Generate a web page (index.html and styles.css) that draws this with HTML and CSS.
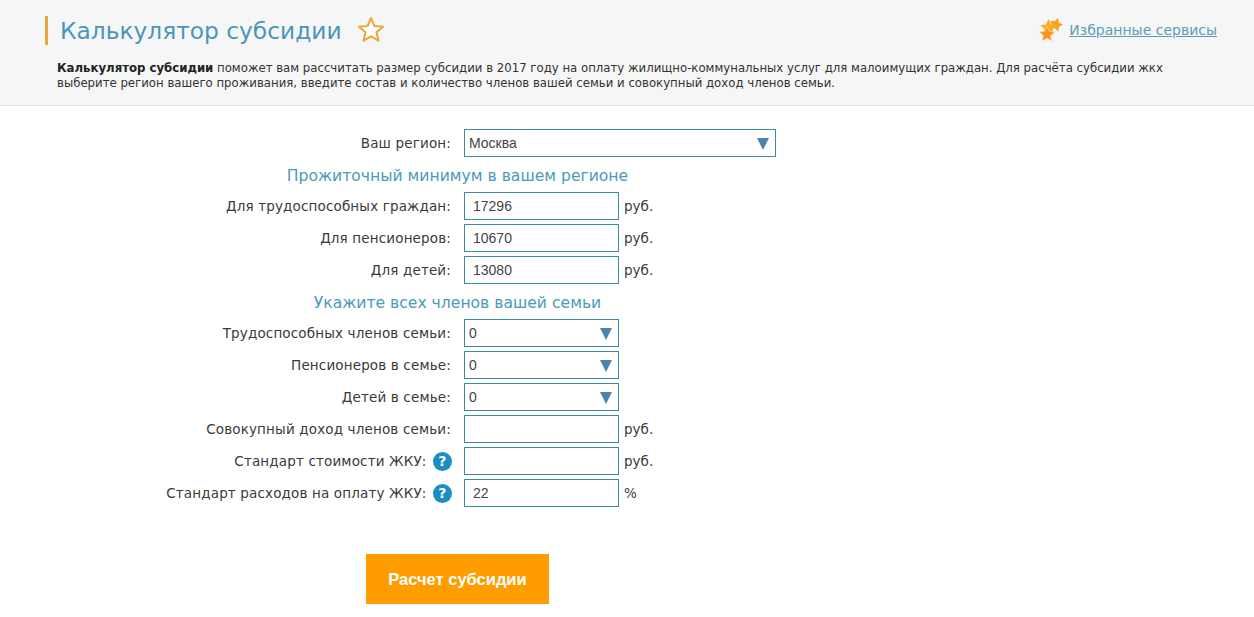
FILE: index.html
```html
<!DOCTYPE html>
<html lang="ru">
<head>
  <meta charset="UTF-8" />
  <title>Калькулятор субсидии</title>
  <link rel="stylesheet" href="styles.css">
</head>
<body>
  <header class="top">
    <div class="top-row">
      <div class="title-wrap">
        <h1 class="title">Калькулятор субсидии</h1>
        <svg class="star" width="28" height="26" viewBox="0 0 28 26">
          <path d="M14 2l3.4 8 8.6.7-6.500 5.600 2 8.400L14 20.300l-7.500 4.400 2-8.400L2 10.700l8.600-.7z" fill="#fff" stroke="#e8a93c" stroke-width="2" stroke-linejoin="round"/>
        </svg>
      </div>
      <div class="fav">
        <svg class="fav-icon" width="24" height="23" viewBox="0 0 24 23">
          <path d="M19 0l.8 4.600 4.200 1.900-4 2.300-.6 4.600-3.400-3.100-4.600.9 1.900-4.300L11 2.800l4.600.5z" fill="#f9a11b"/>
          <path d="M9.500 1l2.500 5.400 5.900.7-4.300 4 1.100 5.800-5.200-2.900-5.200 2.900 1.100-5.800-4.300-4 5.900-.7z" fill="#fbab2a"/>
          <path d="M8 8.500l2.300 4.800 5.200.7-3.800 3.600.9 5.200L8 20.300l-4.600 2.500.9-5.200L.5 14l5.200-.7z" fill="#f7941d" stroke="#fdd9a0" stroke-width=".7"/>
        </svg>
        <a class="fav-link">Избранные сервисы</a>
      </div>
    </div>
    <p class="intro"><b>Калькулятор субсидии</b> поможет вам рассчитать размер субсидии в 2017 году на оплату жилищно-коммунальных услуг для малоимущих граждан. Для расчёта субсидии жкх выберите регион вашего проживания, введите состав и количество членов вашей семьи и совокупный доход членов семьи.</p>
  </header>

  <main class="form">
    <div class="row">
      <div class="label">Ваш регион:</div>
      <div class="select wide">Москва<span class="arrow"></span></div>
    </div>

    <h2 class="section">Прожиточный минимум в вашем регионе</h2>

    <div class="row">
      <div class="label">Для трудоспособных граждан:</div>
      <div class="input">17296</div>
      <div class="unit">руб.</div>
    </div>
    <div class="row">
      <div class="label">Для пенсионеров:</div>
      <div class="input">10670</div>
      <div class="unit">руб.</div>
    </div>
    <div class="row">
      <div class="label">Для детей:</div>
      <div class="input">13080</div>
      <div class="unit">руб.</div>
    </div>

    <h2 class="section">Укажите всех членов вашей семьи</h2>

    <div class="row">
      <div class="label">Трудоспособных членов семьи:</div>
      <div class="select">0<span class="arrow"></span></div>
    </div>
    <div class="row">
      <div class="label">Пенсионеров в семье:</div>
      <div class="select">0<span class="arrow"></span></div>
    </div>
    <div class="row">
      <div class="label">Детей в семье:</div>
      <div class="select">0<span class="arrow"></span></div>
    </div>
    <div class="row">
      <div class="label">Совокупный доход членов семьи:</div>
      <div class="input"></div>
      <div class="unit">руб.</div>
    </div>
    <div class="row">
      <div class="label">Стандарт стоимости ЖКУ: <span class="help">?</span></div>
      <div class="input"></div>
      <div class="unit">руб.</div>
    </div>
    <div class="row">
      <div class="label">Стандарт расходов на оплату ЖКУ: <span class="help">?</span></div>
      <div class="input">22</div>
      <div class="unit">%</div>
    </div>

    <button class="calc-btn">Расчет субсидии</button>
  </main>
</body>
</html>
```

FILE: styles.css
```css
html, body {
  margin: 0;
  padding: 0;
  background: #fff;
  height: 617px;
  overflow: hidden;
}
body {
  font-family: 'DejaVu Sans', Verdana, sans-serif;
  font-size: 13.5px;
  color: #3a3a3a;
}
.top {
  box-sizing: border-box;
  height: 106px;
  background: #f6f6f6;
  border-bottom: 1px solid #e3e3e3;
  padding: 16px 37px 0 45px;
}
.top-row {
  display: flex;
  justify-content: space-between;
  align-items: center;
  height: 29px;
}
.title-wrap {
  display: flex;
  align-items: center;
}
.title {
  margin: 0;
  border-left: 3px solid #e8a93c;
  padding-left: 12px;
  height: 29px;
  line-height: 30px;
  font-size: 23.3px;
  font-weight: 400;
  color: #4a96ba;
}
.star {
  margin: -3px 0 0 15px;
}
.fav {
  display: flex;
  align-items: center;
  gap: 6px;
  margin-top: -2px;
}
.fav-link {
  color: #5b9db8;
  font-size: 14px;
  text-decoration: underline;
}
.intro {
  margin: 16px 0 0 12px;
  width: 1130px;
  font-size: 11.73px;
  line-height: 15px;
  color: #333;
}
.intro b {
  color: #222;
}
.form {
  width: 915px;
  padding-top: 23px;
  display: flex;
  flex-direction: column;
  gap: 4px;
}
.row {
  display: flex;
  align-items: center;
  height: 28px;
}
.label {
  width: 451px;
  display: flex;
  justify-content: flex-end;
  align-items: center;
  white-space: pre;
  margin-right: 13px;
  letter-spacing: 0.15px;
}
.section {
  margin: 0;
  height: 27px;
  line-height: 30px;
  text-align: center;
  font-size: 15.6px;
  font-weight: 400;
  color: #4a9bb8;
}
.input, .select {
  box-sizing: border-box;
  width: 155px;
  height: 28px;
  border: 1px solid #3b8ba0;
  background: #fff;
  font-family: 'Liberation Sans', Arial, sans-serif;
  font-size: 14px;
  line-height: 26px;
  color: #444;
}
.input {
  padding-left: 8px;
}
.select {
  position: relative;
  padding-left: 4px;
}
.select.wide {
  width: 312px;
}
.arrow {
  position: absolute;
  right: 6px;
  top: 8px;
  border-left: 6px solid transparent;
  border-right: 6px solid transparent;
  border-top: 12px solid #4c83ac;
}
.unit {
  margin-left: 5px;
}
.help {
  box-sizing: border-box;
  width: 19px;
  height: 19px;
  margin: 0 -1px 0 2px;
  border-radius: 50%;
  background: #1a8fc0;
  color: #fff;
  font-size: 14px;
  font-weight: 700;
  line-height: 19px;
  text-align: center;
}
.calc-btn {
  align-self: center;
  width: 183px;
  height: 50px;
  margin-top: 43px;
  border: none;
  background: #ff9c00;
  color: #fff;
  font-family: 'Liberation Sans', Arial, sans-serif;
  font-size: 16.5px;
  font-weight: 700;
  cursor: pointer;
}
```
